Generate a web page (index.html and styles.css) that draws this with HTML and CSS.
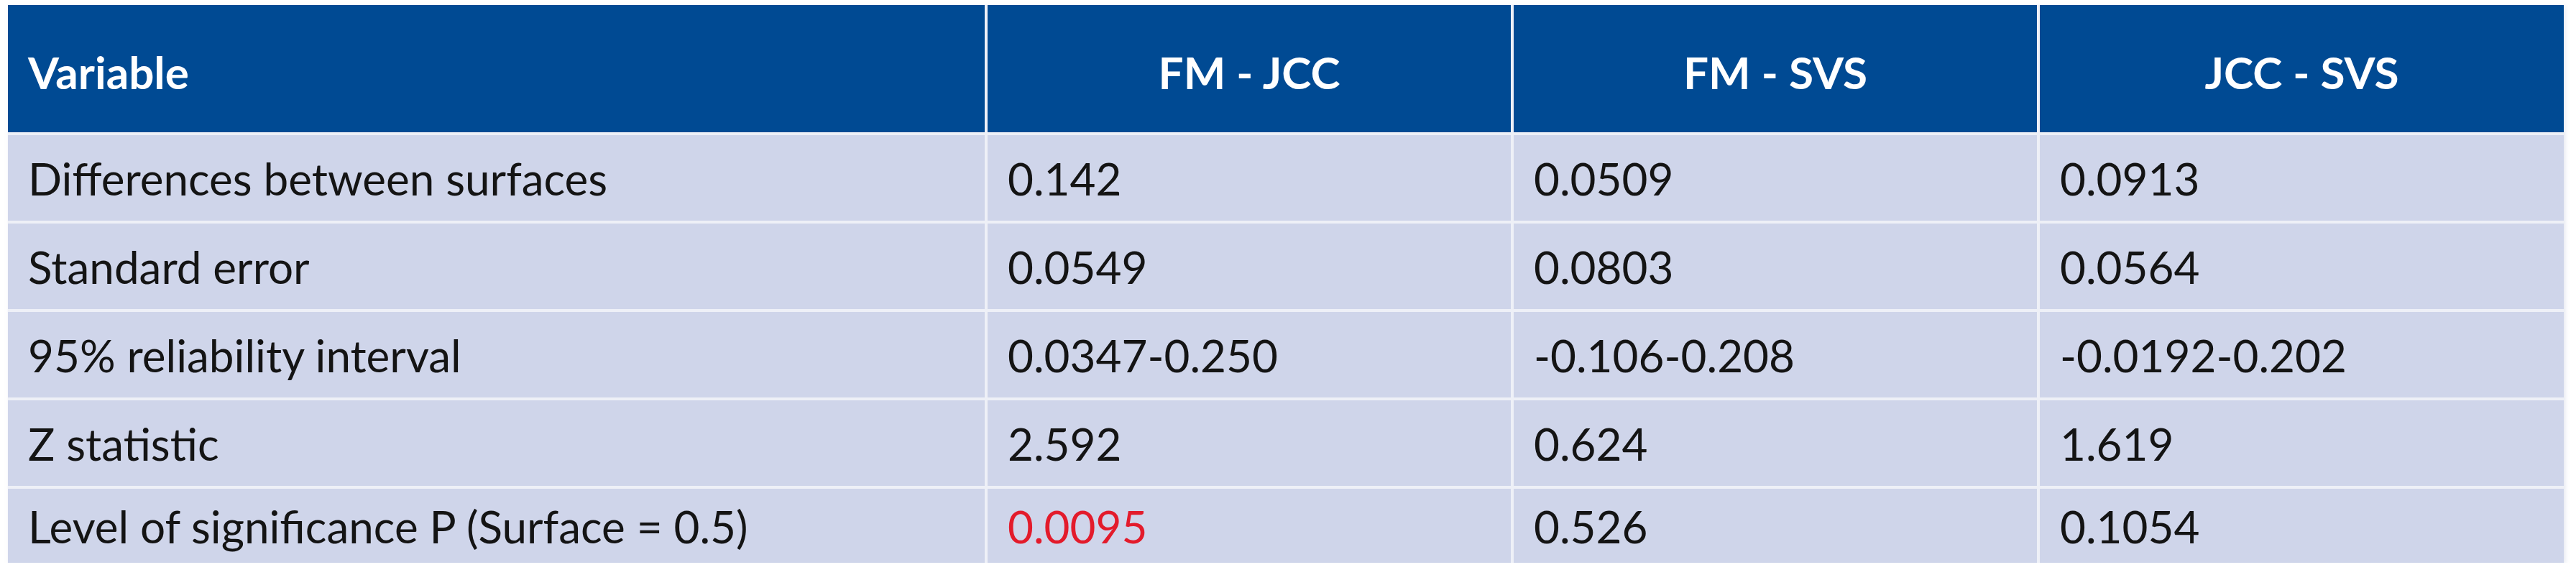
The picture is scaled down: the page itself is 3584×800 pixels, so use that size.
FILE: index.html
```html
<!DOCTYPE html>
<html lang="en">
<head>
<meta charset="utf-8">
<title>Surface comparison</title>
<link rel="stylesheet" href="styles.css">
</head>
<body>
<div class="table">
  <div class="cell head">Variable</div>
  <div class="cell head center">FM - JCC</div>
  <div class="cell head center">FM - SVS</div>
  <div class="cell head center">JCC - SVS</div>

  <div class="cell">Differences between surfaces</div>
  <div class="cell">0.142</div>
  <div class="cell">0.0509</div>
  <div class="cell">0.0913</div>

  <div class="cell">Standard error</div>
  <div class="cell">0.0549</div>
  <div class="cell">0.0803</div>
  <div class="cell">0.0564</div>

  <div class="cell">95% reliability interval</div>
  <div class="cell">0.0347-0.250</div>
  <div class="cell">-0.106-0.208</div>
  <div class="cell">-0.0192-0.202</div>

  <div class="cell">Z statistic</div>
  <div class="cell">2.592</div>
  <div class="cell">0.624</div>
  <div class="cell">1.619</div>

  <div class="cell">Level of significance P (Surface = 0.5)</div>
  <div class="cell red">0.0095</div>
  <div class="cell">0.526</div>
  <div class="cell">0.1054</div>
</div>
</body>
</html>
```

FILE: styles.css
```css
html, body {
  margin: 0;
  padding: 0;
  background: #ffffff;
}

body {
  padding: 7px 0 0 11px;
  font-family: "Lato", "Liberation Sans", sans-serif;
}

.table {
  display: grid;
  width: 3556px;
  grid-template-columns: 1359px 728px 728px 729px;
  grid-template-rows: 177px repeat(4, 119px) 103px;
  column-gap: 4px;
  row-gap: 4px;
  background: #eef0f7;
  box-shadow: 2px 2px 6px rgba(150, 160, 190, 0.25);
}

.cell {
  display: flex;
  align-items: center;
  padding: 0 0 0 28px;
  background: #cfd5ea;
  color: #141414;
  font-size: 62px;
  white-space: nowrap;
}

.head {
  background: #004a93;
  color: #ffffff;
  font-weight: 700;
  padding-top: 8px;
}

.head.center {
  justify-content: center;
  padding-left: 0;
}

.red {
  color: #e31b2b;
}
```
